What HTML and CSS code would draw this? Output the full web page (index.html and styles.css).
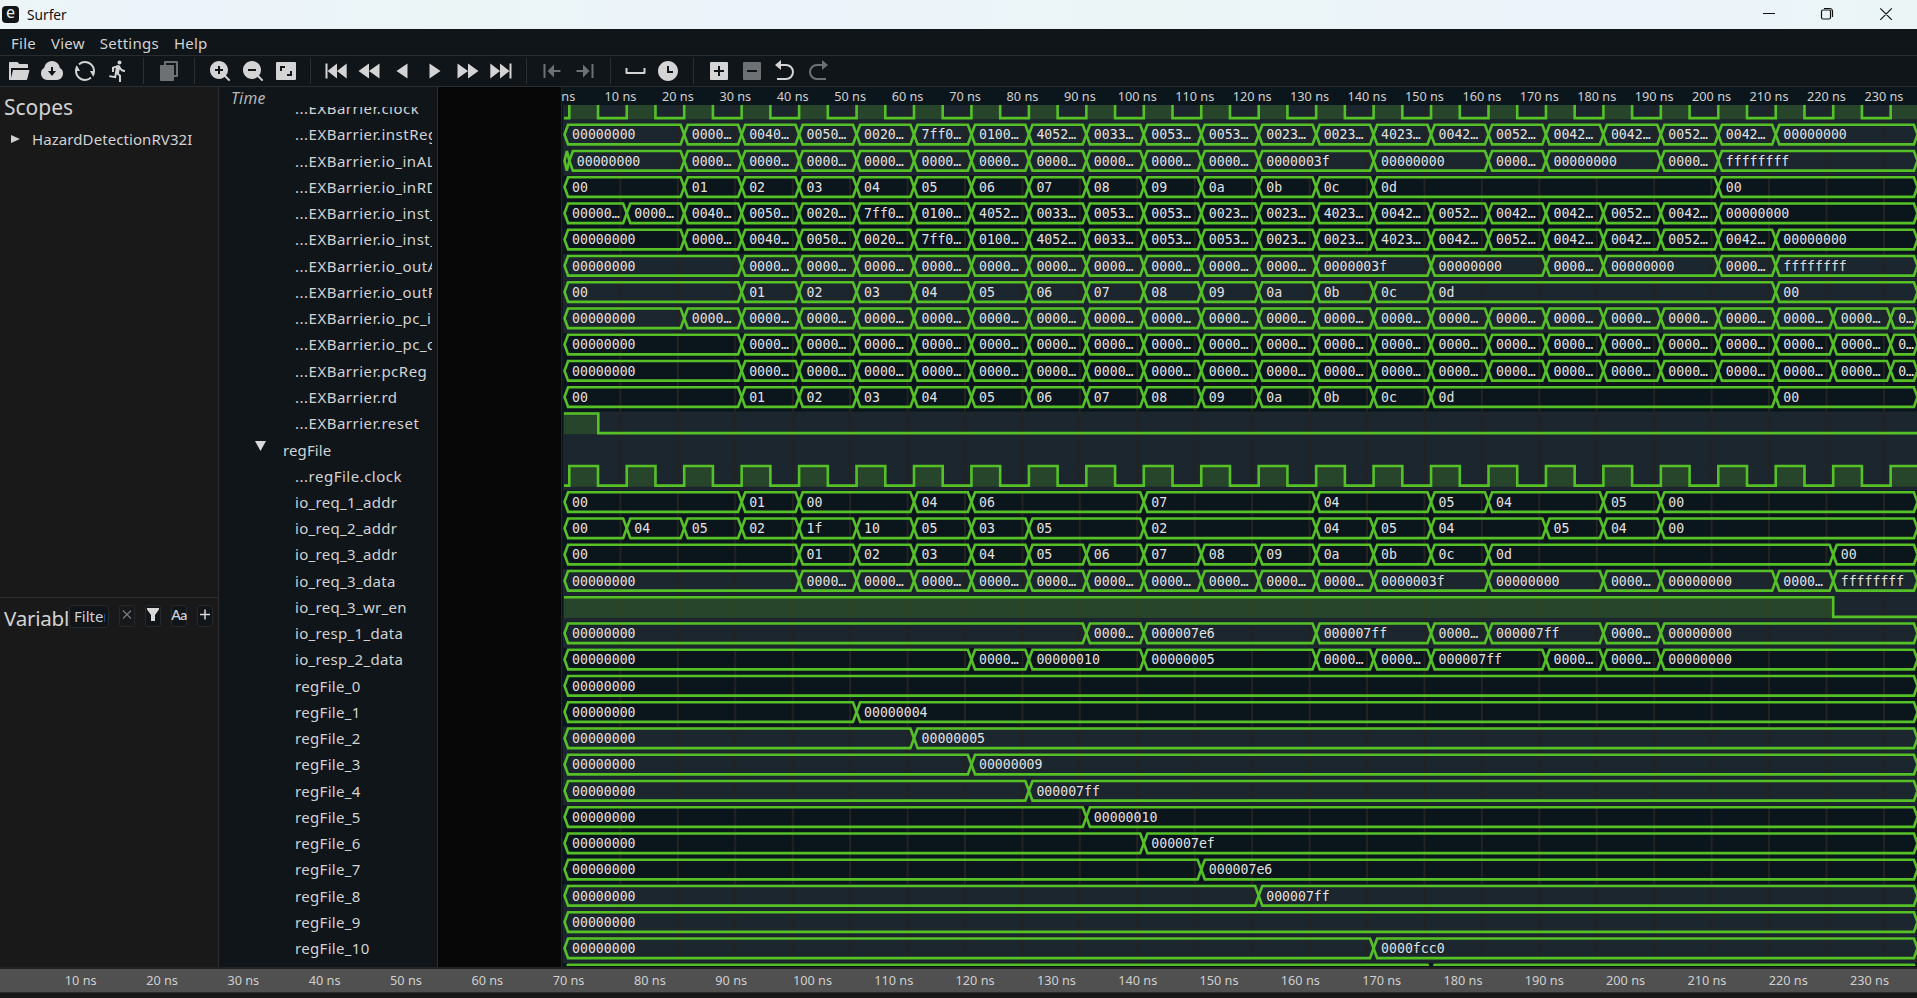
FILE: index.html
```html
<!DOCTYPE html>
<html lang="en">
<head>
<meta charset="utf-8">
<title>Surfer</title>
<link rel="stylesheet" href="styles.css">
</head>
<body>
<div class="window">
  <header class="titlebar">
    <span class="app-icon">e</span>
    <span class="app-title">Surfer</span>
    <svg class="win-controls" width="136" height="29" viewBox="0 0 136 29">
      <path d="M0 13.5h12M58.500 11.500a1.500 1.500 0 0 1 1.500-1.500h6a1.500 1.500 0 0 1 1.500 1.500v6a1.500 1.500 0 0 1-1.500 1.500h-6a1.500 1.500 0 0 1-1.500-1.500zM61 8.500h5.500a3 3 0 0 1 3 3V17M117.300 8.300l11.500 11.500M128.800 8.300l-11.500 11.500"/>
    </svg>
  </header>
  <nav class="menubar"><span>File</span><span>View</span><span>Settings</span><span>Help</span></nav>
  <div class="toolbar">
    <svg viewBox="0 0 24 24"><path d="M3 21c-.55 0-1-.45-1-1V4c0-.55.45-1 1-1h7.400l2 2H20c.55 0 1 .45 1 1v3H4v10l2-8h16.500l-2.300 9.240a1 1 0 0 1-.97.76H3z"/></svg>
    <svg viewBox="0 0 24 24"><path d="M7 20.980a6.500 6.500 0 0 1-2.936-12 8 8 0 0 1 15.872 0 6.500 6.500 0 0 1-2.936 12V21H7zM13 12V8h-2v4H8l4 5 4-5h-3z"/></svg>
    <svg viewBox="0 0 24 24"><path d="M5.463 4.433A9.960 9.960 0 0 1 12 2c5.523 0 10 4.477 10 10 0 2.136-.67 4.116-1.810 5.740L17 12h3A8 8 0 0 0 6.460 6.228zM18.537 19.567A9.960 9.960 0 0 1 12 22C6.477 22 2 17.523 2 12c0-2.136.67-4.116 1.810-5.740L7 12H4a8 8 0 0 0 13.540 5.772z"/></svg>
    <svg viewBox="0 0 24 24"><path d="M9.830 8.790L8 9.456V13H6V8.050h.015l5.268-1.918c.244-.093.51-.14.782-.131a2.616 2.616 0 0 1 2.427 1.820c.186.583.356.977.51 1.182A4.992 4.992 0 0 0 19 11v2a6.986 6.986 0 0 1-5.402-2.547l-.697 3.956L15 16.170V23h-2v-5.898l-2.270-1.904-.727 4.127-6.894-1.215.348-1.970 4.924.868zM13.500 5.500a2 2 0 1 1 0-4 2 2 0 0 1 0 4z"/></svg>
    <i class="sep"></i>
    <svg class="off" viewBox="0 0 24 24"><path d="M7 6V3a1 1 0 0 1 1-1h12a1 1 0 0 1 1 1v14a1 1 0 0 1-1 1h-3v3c0 .55-.45 1-1 1H4a1 1 0 0 1-1-1V7c0-.55.45-1 1-1zm2 0h8v10h2V4H9z"/></svg>
    <i class="sep"></i>
    <svg viewBox="0 0 24 24"><path d="M18.031 16.617l4.283 4.282-1.415 1.415-4.282-4.283A8.960 8.960 0 0 1 11 20c-4.968 0-9-4.032-9-9s4.032-9 9-9 9 4.032 9 9a8.960 8.960 0 0 1-1.969 5.617zM10 10H7v2h3v3h2v-3h3v-2h-3V7h-2z"/></svg>
    <svg viewBox="0 0 24 24"><path d="M18.031 16.617l4.283 4.282-1.415 1.415-4.282-4.283A8.960 8.960 0 0 1 11 20c-4.968 0-9-4.032-9-9s4.032-9 9-9 9 4.032 9 9a8.960 8.960 0 0 1-1.969 5.617zM7 10v2h8v-2z"/></svg>
    <svg viewBox="0 0 24 24"><path d="M21 3a1 1 0 0 1 1 1v16a1 1 0 0 1-1 1H3a1 1 0 0 1-1-1V4a1 1 0 0 1 1-1zm-3 9h-2v3h-3v2h5zm-7-5H6v5h2V9h3z"/></svg>
    <i class="sep"></i>
    <svg viewBox="0 0 24 24"><path d="M1.500 4.500h2v15h-2zM13 4.500v15L3.500 12zM22.700 4.500v15L13 12z"/></svg>
    <svg viewBox="0 0 24 24"><path d="M12 4.500v15L1.500 12zM22.500 4.500v15L12 12z"/></svg>
    <svg viewBox="0 0 24 24"><path d="M17.500 4.500v15L6.500 12z"/></svg>
    <svg viewBox="0 0 24 24"><path d="M6.500 4.500v15l11-7.500z"/></svg>
    <svg viewBox="0 0 24 24"><path d="M12 4.500v15l10.500-7.500zM1.500 4.500v15L12 12z"/></svg>
    <svg viewBox="0 0 24 24"><path d="M22.500 4.500h-2v15h2zM11 4.500v15l9.500-7.500zM1.300 4.500v15L11 12z"/></svg>
    <i class="sep"></i>
    <svg class="off" viewBox="0 0 24 24"><path d="M3.500 5h2v14h-2zM14 5.500v5.500h6.500v2H14v5.500L7.500 12z"/></svg>
    <svg class="off" viewBox="0 0 24 24"><path d="M18.500 5h2v14h-2zM10 5.500v5.500H3.500v2H10v5.500l6.500-6.500z"/></svg>
    <i class="sep"></i>
    <svg viewBox="0 0 24 24"><path d="M4.500 9v4h16V9h2v5a1 1 0 0 1-1 1h-18a1 1 0 0 1-1-1V9z"/></svg>
    <svg viewBox="0 0 24 24"><path d="M12 22C6.477 22 2 17.523 2 12S6.477 2 12 2s10 4.477 10 10-4.477 10-10 10zm1-10V7h-2v7h6v-2z"/></svg>
    <i class="sep"></i>
    <svg viewBox="0 0 24 24"><path d="M4 3h16a1 1 0 0 1 1 1v16a1 1 0 0 1-1 1H4a1 1 0 0 1-1-1V4a1 1 0 0 1 1-1zm7 8H7v2h4v4h2v-4h4v-2h-4V7h-2z"/></svg>
    <svg class="off" viewBox="0 0 24 24"><path d="M4 3h16a1 1 0 0 1 1 1v16a1 1 0 0 1-1 1H4a1 1 0 0 1-1-1V4a1 1 0 0 1 1-1zm3 8v2h10v-2z"/></svg>
    <svg viewBox="0 0 24 24"><path d="M8 7v4L2 6l6-5v4h5a8 8 0 1 1 0 16H4v-2h9a6 6 0 1 0 0-12z"/></svg>
    <svg class="off" viewBox="0 0 24 24"><path d="M16 7v4l6-5-6-5v4h-5a8 8 0 1 0 0 16h9v-2h-9a6 6 0 1 1 0-12z"/></svg>
  </div>
  <main class="content">
    <aside class="sidebar">
      <section class="scopes">
        <h2>Scopes</h2>
        <div class="scope"><svg width="9" height="8" viewBox="0 0 9 8"><path d="M0 0l9 4-9 4z"/></svg><span>HazardDetectionRV32I</span></div>
      </section>
      <section class="variables">
        <h2>Variables</h2>
        <div class="filter"><span>Filter</span></div>
        <div class="buttons">
          <span class="btn dim"><svg viewBox="0 0 16 21"><path class="line" d="M4 4.500l8 8M12 4.500l-8 8"/></svg></span>
          <span class="btn"><svg viewBox="0 0 16 21"><path d="M2 2h12v1.500L10 9v6H6V9L2 3.500z"/></svg></span>
          <span class="btn">Aa</span>
          <span class="btn"><svg viewBox="0 0 16 21"><path class="line wide" d="M8 3.500v10M3 8.500h10"/></svg></span>
        </div>
      </section>
    </aside>
    <section class="names">
      <div class="time">Time</div>
      <div class="name-clip"><div class="name-list" id="names"></div></div>
    </section>
    <section class="values"></section>
    <section class="waves"><svg id="waves" width="1355" height="880" viewBox="562 87 1355 880"></svg></section>
  </main>
  <footer class="overview"><svg id="overview" width="1917" height="23"></svg></footer>
</div>
<script src="waves.js"></script>
</body>
</html>
```
FILE: styles.css
```css
* { box-sizing: border-box; }
body {
  margin: 0;
  background: #181818;
  color: #d2d2d2;
  font: 15px/20px "Noto Sans", sans-serif;
}
.window {
  width: 1917px;
  height: 998px;
  display: flex;
  flex-direction: column;
  overflow: hidden;
}
.titlebar {
  height: 29px;
  flex: none;
  display: flex;
  align-items: center;
  padding-left: 2px;
  background: linear-gradient(90deg, #ebf5f6, #ecf3fb 8%, #ebf5f6 24%, #ecf3fb 40%, #ebf5f6 60%, #ecf3fb 84%, #ebf5f6);
  color: #111;
}
.app-icon {
  width: 17px;
  height: 17px;
  border-radius: 4px;
  background: #111518;
  color: #e8f0f2;
  font: 16px/13px "Noto Sans", sans-serif;
  text-align: center;
}
.app-title { margin-left: 8px; font-size: 13.7px; }
.win-controls { margin-left: auto; margin-right: 18px; fill: none; stroke: #111; stroke-width: 1.2; }
.menubar {
  height: 27px;
  flex: none;
  display: flex;
  gap: 15px;
  padding: 4px 11px 0;
  letter-spacing: .25px;
  background: #0f1519;
  border-bottom: 1px solid #292d30;
}
.toolbar {
  height: 31px;
  flex: none;
  display: flex;
  align-items: center;
  gap: 9px;
  padding-left: 7.400px;
  background: #0f1519;
  border-bottom: 1px solid #292d30;
}
.toolbar svg { width: 24px; height: 24px; flex: none; fill: #d4d4d4; fill-rule: evenodd; }
.toolbar svg.off { fill: #6d7173; }
.sep { width: 1px; height: 26px; margin: 0 3.800px; background: #2c3033; }
.content { flex: none; height: 880px; display: grid; grid-template-columns: 219px 219px 124px 1355px; }
.sidebar { border-right: 1px solid #2b2e30; background: #191919; display: grid; grid-template-rows: 511px 1fr; }
h2 { margin: 0; font: 21px/26px "Noto Sans", sans-serif; }
.scopes { border-bottom: 1px solid #2e2e2e; padding: 7px 4px; }
.scope { display: flex; align-items: center; margin: 9px 0 0 7px; gap: 12px; line-height: 20px; letter-spacing: .08px; }
.scope svg { fill: #d0d0d0; }
.variables { display: flex; align-items: flex-start; padding: 7px 0 0 4px; }
.variables h2 { width: 65px; overflow: hidden; letter-spacing: -.25px; font-size: 20.600px; }
.filter {
  width: 40px;
  height: 23px;
  padding: 0 4px;
  border: 1px solid #23292d;
  border-radius: 3px;
  background: #0f1519;
}
.filter span { display: block; overflow: hidden; width: 30.500px; }
.buttons { display: flex; gap: 10px; margin-left: 10px; }
.btn {
  width: 16px;
  height: 22px;
  border: 1px solid #23292d;
  border-radius: 3px;
  background: #0f1519;
  display: flex;
  justify-content: center;
  font: 600 14px/17px Lato, sans-serif;
  letter-spacing: -.5px;
}
.btn svg { width: 16px; height: 21px; flex: none; fill: #d8d8d8; }
.btn .line { fill: none; stroke: #7a7d7f; stroke-width: 1.200; }
.btn .line.wide { stroke: #d8d8d8; stroke-width: 1.500; }
.btn.dim { background: #161819; }
.names { background: #0f1519; border-right: 1px solid #2b2e30; }
.time { height: 20px; padding: 1px 0 0 12px; font-size: 15.800px; letter-spacing: .2px; font-style: italic; color: #b4b6b8; }
.name-clip { height: 860px; width: 213px; overflow: hidden; }
.name-list { margin-top: -11.800px; }
.name { height: 26.250px; line-height: 26px; padding-left: 76px; white-space: nowrap; letter-spacing: .32px; }
.name.deep { letter-spacing: .5px; }
.name.group { display: flex; align-items: center; padding-left: 36px; gap: 17px; letter-spacing: .1px; }
.name.group svg { margin-top: -7px; fill: #d8d8d8; }
.values { background: #070707; border-right: 1px solid #222527; }
.waves { background: #0b151c; overflow: hidden; }
.waves svg, .overview svg { display: block; }
.waves .wave { fill: none; stroke: #55c127; stroke-width: 2.600; }
.waves .high { fill: #54c424; fill-opacity: .2; }
.waves .light { fill: #1c262e; }
.waves .grid { stroke: #252322; stroke-width: 2; }
.waves .value { font: 13.200px "DejaVu Sans Mono", monospace; fill: #e2e2e2; }
.tick { font: 12.700px "Noto Sans", sans-serif; fill: #cfcfcf; text-anchor: middle; }
.overview { height: 26px; flex: none; border-top: 2px solid #222; border-bottom: 1px solid #2a2a2a; background: #505050; }
```
FILE: waves.js
```js
const PERIOD = 57.45, ORIGIN = 569.3, LEFT = 564.5, RIGHT = 1917.5;
const PITCH = 26.25, FIRST = 134.55, HALF = 9.8;
const edge = k => ORIGIN + k * PERIOD;
const Z = "00000000", S = "0000…";

// Consecutive one-cycle values starting at clock edge k.
const run = (k, values) => values.map((v, i) => [k + i, v]);
const same = (k, n, v) => run(k, Array(n).fill(v));
const codes = k => run(k, ["01","02","03","04","05","06","07","08","09","0a","0b","0c","0d"]);
const program = ["0040…","0050…","0020…","7ff0…","0100…","4052…","0033…","0053…","0053…","0023…","0023…","4023…","0042…","0052…","0042…","0042…","0052…","0042…",Z];
const alu = k => [...same(k, 10, S), [k+10,"0000003f"], [k+12,Z], [k+14,S], [k+15,Z], [k+17,S], [k+18,"ffffffff"]];
const inst = [[null,Z],[2,S],...run(3, program)];
const rd = [[null,"00"],...codes(3),[21,"00"]];
const pc = [[null,Z],...same(3, 20, S),[23,"0…"]];
const reg = (k, v) => k ? [[null,Z],[k,v]] : [[null,Z]];

const rows = [
  ["...EXBarrier.clock", "clock"],
  ["...EXBarrier.instReg", inst],
  ["...EXBarrier.io_inALU", [[null,""],[0,Z],...alu(2)]],
  ["...EXBarrier.io_inRD", [[null,"00"],...codes(2),[20,"00"]]],
  ["...EXBarrier.io_inst_in", [[null,"00000…"],[1,S],...run(2, program)]],
  ["...EXBarrier.io_inst_out", inst],
  ["...EXBarrier.io_outALU", [[null,Z],...alu(3)]],
  ["...EXBarrier.io_outRD", rd],
  ["...EXBarrier.io_pc_in", [[null,Z],...same(2, 21, S),[23,"0…"]]],
  ["...EXBarrier.io_pc_out", pc],
  ["...EXBarrier.pcReg", pc],
  ["...EXBarrier.rd", rd],
  ["...EXBarrier.reset", 598.3],
  ["regFile", "group"],
  ["...regFile.clock", "clock"],
  ["io_req_1_addr", [[null,"00"],[3,"01"],[4,"00"],[6,"04"],[7,"06"],[10,"07"],[13,"04"],[15,"05"],[16,"04"],[18,"05"],[19,"00"]]],
  ["io_req_2_addr", [[null,"00"],[1,"04"],[2,"05"],[3,"02"],[4,"1f"],[5,"10"],[6,"05"],[7,"03"],[8,"05"],[10,"02"],[13,"04"],[14,"05"],[15,"04"],[17,"05"],[18,"04"],[19,"00"]]],
  ["io_req_3_addr", [[null,"00"],...codes(4),[22,"00"]]],
  ["io_req_3_data", [[null,Z],...alu(4)]],
  ["io_req_3_wr_en", edge(22)],
  ["io_resp_1_data", [[null,Z],[9,S],[10,"000007e6"],[13,"000007ff"],[15,S],[16,"000007ff"],[18,S],[19,Z]]],
  ["io_resp_2_data", [[null,Z],[7,S],[8,"00000010"],[10,"00000005"],[13,S],[14,S],[15,"000007ff"],[17,S],[18,S],[19,Z]]],
  ["regFile_0", reg()],
  ["regFile_1", reg(5,"00000004")],
  ["regFile_2", reg(6,"00000005")],
  ["regFile_3", reg(7,"00000009")],
  ["regFile_4", reg(8,"000007ff")],
  ["regFile_5", reg(9,"00000010")],
  ["regFile_6", reg(10,"000007ef")],
  ["regFile_7", reg(11,"000007e6")],
  ["regFile_8", reg(12,"000007ff")],
  ["regFile_9", reg()],
  ["regFile_10", reg(14,"0000fcc0")],
  ["", reg(15,"")]
];

function bus(cells, y) {
  return cells.map(([k, text], i) => {
    const a = k === null ? LEFT : edge(k);
    const b = i + 1 < cells.length ? edge(cells[i + 1][0]) : RIGHT;
    const s = Math.min(3.6, (b - a) / 2);
    return `<path class="wave" d="M${a} ${y}L${a+s} ${y-HALF}H${b-s}L${b} ${y}L${b-s} ${y+HALF}H${a+s}Z"/>` +
      (text ? `<text class="value" x="${a+7.5}" y="${y+4.8}">${text}</text>` : "");
  }).join("");
}
function level(end, y) {
  return `<rect class="high" x="564" y="${y-HALF}" width="${end-564}" height="${2*HALF+1}"/>` +
    `<path class="wave" d="M564 ${y-HALF}H${end}V${y+HALF}H1917"/>`;
}
function clock(y) {
  let d = `M564 ${y+HALF}`, fills = "";
  for (let k = 0; k < 24; k++) {
    const a = edge(k), b = a + PERIOD / 2;
    d += `H${a}V${y-HALF}H${b}V${y+HALF}`;
    fills += `<rect class="high" x="${a}" y="${y-HALF}" width="${b-a}" height="${2*HALF+1}"/>`;
  }
  return fills + `<path class="wave" d="${d}"/>`;
}

let out = "", grid = "", body = "", ticks = "", names = "";
rows.forEach(([name, data], n) => {
  const y = FIRST + (n - 1) * PITCH;
  if (Math.floor(n / 3) % 2 === 0) out += `<rect class="light" x="563" y="${y-PITCH/2+1.4}" width="1354" height="${PITCH+.3}"/>`;
  if (data === "clock") body += clock(y);
  else if (typeof data === "number") body += level(data, y);
  else if (data !== "group") body += bus(data, y);
  names += data === "group"
    ? `<div class="name group"><svg width="11" height="10" viewBox="0 0 11 10"><path d="M0 0h11L5.5 10z"/></svg><span>${name}</span></div>`
    : `<div class="name${name.startsWith("...") ? " deep" : ""}">${name}</div>`;
});
for (let t = 0; t <= 23; t++) {
  const x = 563 + t * 57.43;
  if (t) grid += `<path class="grid" d="M${x} 105V967"/>`;
  ticks += `<text class="tick" x="${x}" y="101">${t * 10} ns</text>`;
}
document.getElementById("waves").innerHTML =
  `<defs><clipPath id="area"><rect x="562" y="105" width="1355" height="861"/></clipPath></defs>` +
  `<g clip-path="url(#area)">${out}${grid}${body}</g>${ticks}`;
document.getElementById("names").innerHTML = names;

let strip = "";
for (let t = 1; t <= 23; t++) strip += `<text class="tick" x="${-0.6 + t * 81.31}" y="16.3">${t * 10} ns</text>`;
document.getElementById("overview").innerHTML = strip;
```
